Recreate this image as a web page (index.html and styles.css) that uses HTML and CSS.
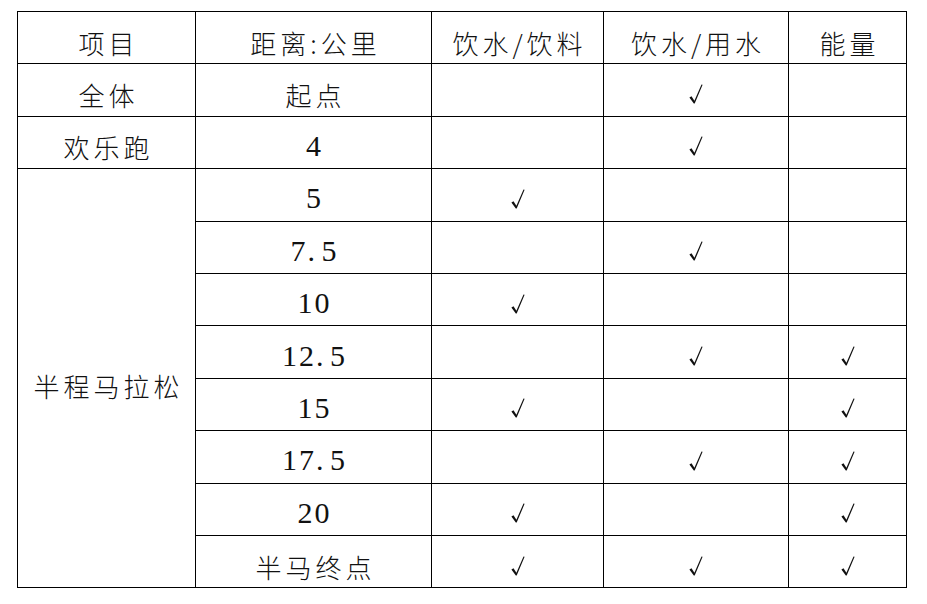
FILE: index.html
```html
<!DOCTYPE html>
<html lang="zh">
<head>
<meta charset="utf-8">
<title>补给站</title>
<link rel="stylesheet" href="styles.css">
</head>
<body>
<svg width="0" height="0" class="defs">
  <symbol id="tick" viewBox="0 0 14 20">
    <path d="M0.4 13.4 L2.5 12.2 L5.4 16.8 L12.5 0.4 L13.6 0.8 L5.7 19.6 L4.8 19.6 Z" fill="#111"/>
  </symbol>
</svg>
<table class="supply">
  <colgroup>
    <col class="c1"><col class="c2"><col class="c3"><col class="c4"><col class="c5">
  </colgroup>
  <tr><td>项目</td><td>距离:公里</td><td>饮水/饮料</td><td>饮水/用水</td><td>能量</td></tr>
  <tr><td>全体</td><td>起点</td><td></td><td class="ck"><svg class="tick"><use href="#tick"/></svg></td><td></td></tr>
  <tr><td>欢乐跑</td><td class="num">4</td><td></td><td class="ck"><svg class="tick"><use href="#tick"/></svg></td><td></td></tr>
  <tr><td rowspan="8" class="span">半程马拉松</td><td class="num">5</td><td class="ck"><svg class="tick"><use href="#tick"/></svg></td><td></td><td></td></tr>
  <tr><td class="num">7<span class="dot">.</span>5</td><td></td><td class="ck"><svg class="tick"><use href="#tick"/></svg></td><td></td></tr>
  <tr><td class="num">10</td><td class="ck"><svg class="tick"><use href="#tick"/></svg></td><td></td><td></td></tr>
  <tr><td class="num">12<span class="dot">.</span>5</td><td></td><td class="ck"><svg class="tick"><use href="#tick"/></svg></td><td class="ck"><svg class="tick"><use href="#tick"/></svg></td></tr>
  <tr><td class="num">15</td><td class="ck"><svg class="tick"><use href="#tick"/></svg></td><td></td><td class="ck"><svg class="tick"><use href="#tick"/></svg></td></tr>
  <tr><td class="num">17<span class="dot">.</span>5</td><td></td><td class="ck"><svg class="tick"><use href="#tick"/></svg></td><td class="ck"><svg class="tick"><use href="#tick"/></svg></td></tr>
  <tr><td class="num">20</td><td class="ck"><svg class="tick"><use href="#tick"/></svg></td><td></td><td class="ck"><svg class="tick"><use href="#tick"/></svg></td></tr>
  <tr><td>半马终点</td><td class="ck"><svg class="tick"><use href="#tick"/></svg></td><td class="ck"><svg class="tick"><use href="#tick"/></svg></td><td class="ck"><svg class="tick"><use href="#tick"/></svg></td></tr>
</table>
</body>
</html>
```

FILE: styles.css
```css
html, body {
  margin: 0;
  padding: 0;
  background: #fff;
}
body {
  padding: 11px 0 0 17px;
}
.defs {
  position: absolute;
  width: 0;
  height: 0;
}
.supply {
  border-collapse: collapse;
  table-layout: fixed;
  width: 889px;
  font-family: "Noto Sans CJK SC", sans-serif;
  font-size: 26px;
  font-weight: 300;
  color: #111;
  letter-spacing: 4px;
}
.c1 { width: 178px; }
.c2 { width: 236px; }
.c3 { width: 172px; }
.c4 { width: 185px; }
.c5 { width: 118px; }
.supply tr {
  height: 52.4px;
}
.supply td {
  border: 1.5px solid #000;
  padding: 10px 0 0 4px;
  text-align: center;
  vertical-align: middle;
  line-height: 30px;
}
.supply td.num {
  font-family: "Liberation Serif", "Times New Roman", serif;
  font-size: 30px;
  font-weight: 400;
  letter-spacing: 2px;
  color: #111;
  padding: 7px 0 0 2px;
}
.dot {
  display: inline-block;
  width: 14px;
  text-align: left;
}
.supply td.ck {
  padding: 8px 0 0 0;
  line-height: 0;
}
.tick {
  width: 14px;
  height: 20px;
  display: inline-block;
}
.supply td.span {
  padding-top: 16px;
}
```
